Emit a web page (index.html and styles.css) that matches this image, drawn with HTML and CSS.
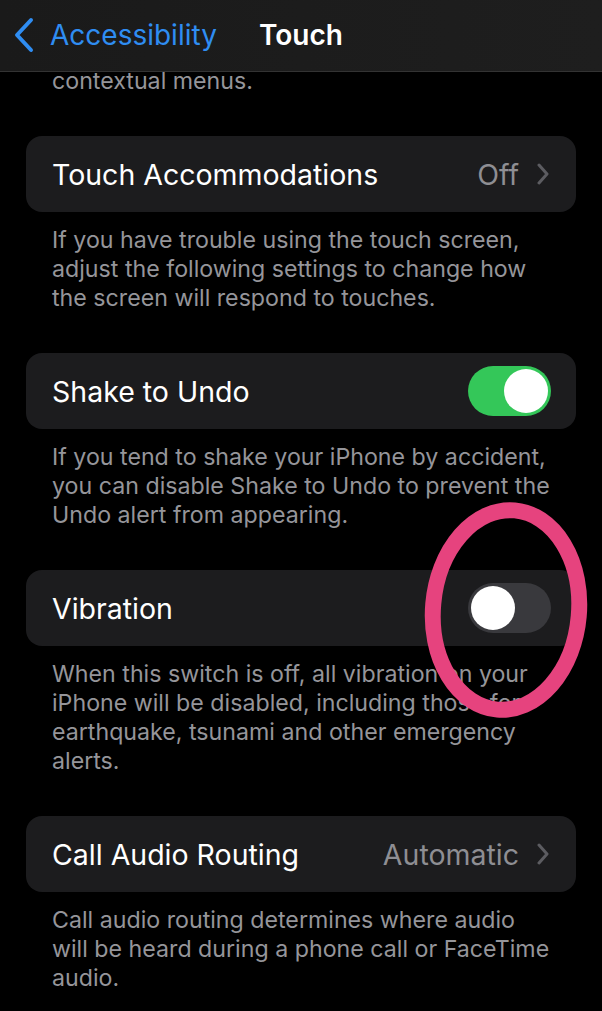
FILE: index.html
```html
<!DOCTYPE html>
<html lang="en">
<head>
    <meta charset="UTF-8">
    <meta name="viewport" content="width=device-width, initial-scale=1.0">
    <title>Touch</title>
    <link rel="stylesheet" href="styles.css">
</head>
<body>
    <div class="navbar">
        <a class="back" href="#">
            <svg class="back-icon" width="22" height="36" viewBox="0 0 22 36">
                <path d="M18 3 L4 18 L18 33" fill="none" stroke="currentColor" stroke-width="4" stroke-linecap="round" stroke-linejoin="round"/>
            </svg>
            <span>Accessibility</span>
        </a>
        <h1 class="title">Touch</h1>
    </div>

    <div class="content">
        <p class="note">contextual menus.</p>

        <div class="group">
            <div class="cell">
                <span class="label">Touch Accommodations</span>
                <span class="detail">Off
                    <svg class="chevron" width="12" height="22" viewBox="0 0 12 22"><path d="M2 2 L10 11 L2 20" fill="none" stroke="currentColor" stroke-width="3" stroke-linecap="round" stroke-linejoin="round"/></svg>
                </span>
            </div>
            <p class="note">If you have trouble using the touch screen, adjust the following settings to change how the screen will respond to touches.</p>
        </div>

        <div class="group">
            <div class="cell">
                <span class="label">Shake to Undo</span>
                <span class="switch on"><span class="knob"></span></span>
            </div>
            <p class="note">If you tend to shake your iPhone by accident, you can disable Shake to Undo to prevent the Undo alert from appearing.</p>
        </div>

        <div class="group vibration">
            <div class="cell">
                <span class="label">Vibration</span>
                <span class="switch"><span class="knob"></span></span>
            </div>
            <p class="note">When this switch is off, all vibration on your iPhone will be disabled, including those for earthquake, tsunami and other emergency alerts.</p>
            <!-- hand-drawn circle around the switch -->
            <svg class="marker" width="170" height="222" viewBox="0 0 170 222">
                <ellipse cx="84" cy="110" rx="73" ry="100" fill="none" stroke="#e6437e" stroke-width="16" transform="rotate(5 84 110)"/>
            </svg>
        </div>

        <div class="group">
            <div class="cell">
                <span class="label">Call Audio Routing</span>
                <span class="detail">Automatic
                    <svg class="chevron" width="12" height="22" viewBox="0 0 12 22"><path d="M2 2 L10 11 L2 20" fill="none" stroke="currentColor" stroke-width="3" stroke-linecap="round" stroke-linejoin="round"/></svg>
                </span>
            </div>
            <p class="note">Call audio routing determines where audio will be heard during a phone call or FaceTime audio.</p>
        </div>
    </div>
</body>
</html>
```

FILE: styles.css
```css
body {
    margin: 0;
    background-color: #000;
    font-family: Inter, "Noto Sans", sans-serif;
    color: #fff;
}
.navbar {
    position: fixed;
    top: 0;
    left: 0;
    right: 0;
    height: 71px;
    background: linear-gradient(90deg, #1a1a1a, #1e1e1e);
    border-bottom: 1px solid #333;
    z-index: 2;
}
.back {
    position: absolute;
    left: 13px;
    top: 17px;
    display: flex;
    align-items: center;
    gap: 15px;
    color: #2f8df2;
    text-decoration: none;
    font-size: 28px;
}
.title {
    margin: 0;
    text-align: center;
    line-height: 71px;
    font-size: 28px;
    font-weight: 600;
}
.content {
    padding: 67px 26px 0;
}
.note {
    margin: 0;
    padding: 0 26px;
    font-size: 23.2px;
    line-height: 29px;
    color: #95959a;
}
.group {
    margin-top: 40px;
}
.cell {
    height: 76px;
    padding: 0 26px;
    display: flex;
    align-items: center;
    justify-content: space-between;
    background-color: #1c1c1e;
    border-radius: 16px;
}
.group .note {
    margin-top: 14px;
}
.label {
    font-size: 28.5px;
}
.detail {
    display: flex;
    align-items: center;
    gap: 18px;
    font-size: 28.5px;
    color: #8e8e93;
}
.chevron {
    color: #5c5c61;
    margin-right: 1px;
}
.switch {
    position: relative;
    width: 83px;
    height: 50px;
    margin-right: -1px;
    border-radius: 25px;
    background-color: #39393d;
}
.switch.on {
    background-color: #34c759;
}
.knob {
    position: absolute;
    top: 3px;
    left: 3px;
    width: 44px;
    height: 44px;
    border-radius: 50%;
    background-color: #fff;
}
.switch.on .knob {
    left: 36px;
}
.vibration {
    position: relative;
}
.marker {
    position: absolute;
    left: 396px;
    top: -70px;
}
```
